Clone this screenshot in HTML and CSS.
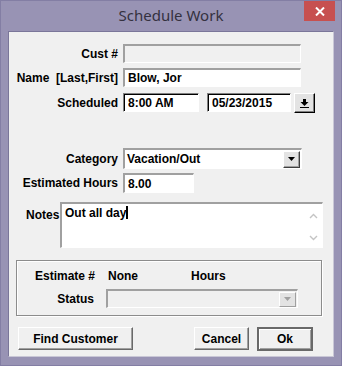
FILE: index.html
```html
<!DOCTYPE html>
<html lang="en">
<head>
    <meta charset="UTF-8">
    <title>Schedule Work</title>
    <link rel="stylesheet" href="styles.css">
</head>
<body>
    <div class="window">
        <div class="titlebar">
            <span></span>
            <span class="title">Schedule Work</span>
            <div class="close">
                <svg width="10" height="9" viewBox="0 0 10 9"><path d="M1 0.5 L9 8.5 M9 0.5 L1 8.5" stroke="#fff" stroke-width="2"/></svg>
            </div>
        </div>
        <div class="client">
            <div class="row row-cust">
                <label class="lbl">Cust #</label>
                <input class="field wide disabled" type="text" value="" disabled>
            </div>
            <div class="row row-name">
                <label class="lbl">Name&nbsp;&nbsp;[Last,First]</label>
                <input class="field wide" type="text" value="Blow, Jor">
            </div>
            <div class="row row-sched">
                <label class="lbl">Scheduled</label>
                <input class="field dark time" type="text" value="8:00 AM">
                <input class="field dark date" type="text" value="05/23/2015">
                <div class="pick-btn">
                    <svg width="9" height="10" viewBox="0 0 9 10"><path d="M3 1 H6 V4 H8.5 L4.5 8 L0.5 4 H3 Z" fill="#000"/><rect x="0" y="9" width="9" height="1" fill="#000"/></svg>
                </div>
            </div>
            <div class="row row-cat">
                <label class="lbl">Category</label>
                <div class="field combo">
                    <span class="combo-text">Vacation/Out</span>
                    <div class="drop-btn"><svg width="7" height="4" viewBox="0 0 7 4"><path d="M0 0 H7 L3.5 4 Z" fill="#000"/></svg></div>
                </div>
            </div>
            <div class="row row-hours">
                <label class="lbl">Estimated Hours</label>
                <input class="field hours" type="text" value="8.00">
            </div>
            <div class="row-notes">
                <label class="notes-lbl">Notes</label>
                <div class="field notes">
                    <div class="notes-text">Out all day<span class="caret"></span></div>
                    <div class="scroll">
                        <svg width="9" height="6" viewBox="0 0 9 6"><path d="M1 5 L4.5 1.5 L8 5" stroke="#c4c4c4" stroke-width="1.4" fill="none"/></svg>
                        <svg width="9" height="6" viewBox="0 0 9 6"><path d="M1 1 L4.5 4.5 L8 1" stroke="#c4c4c4" stroke-width="1.4" fill="none"/></svg>
                    </div>
                </div>
            </div>
            <div class="group">
                <div class="grow">
                    <span class="g-lbl">Estimate #</span>
                    <span class="g-val">None</span>
                    <span>Hours</span>
                </div>
                <div class="grow grow-status">
                    <span class="g-lbl status-lbl">Status</span>
                    <div class="field combo status disabled">
                        <span class="combo-text"></span>
                        <div class="drop-btn off"><svg width="7" height="4" viewBox="0 0 7 4"><path d="M0 0 H7 L3.5 4 Z" fill="#a0a0a0"/></svg></div>
                    </div>
                </div>
            </div>
            <div class="buttons">
                <button class="btn find">Find Customer</button>
                <button class="btn cancel">Cancel</button>
                <button class="btn ok">Ok</button>
            </div>
        </div>
    </div>
</body>
</html>
```

FILE: styles.css
```css
/* Window frame */
body {
    margin: 0;
    font-family: "Liberation Sans", Arial, sans-serif;
}
.window {
    width: 340px;
    height: 364px;
    border: 1px solid #837ea4;
    background: #9893b4;
}
.titlebar {
    height: 30px;
    display: grid;
    grid-template-columns: 1fr auto 1fr;
}
.title {
    font-family: "Noto Sans", sans-serif;
    font-size: 15px;
    line-height: 28px;
    color: #34313f;
}
.close {
    justify-self: end;
    width: 31px;
    height: 20px;
    margin-right: 6px;
    background: #c75050;
    display: flex;
    align-items: center;
    justify-content: center;
}

/* Dialog body */
.client {
    margin-left: 7px;
    width: 324px;
    height: 312px;
    padding-top: 12px;
    border-top: 1px solid #7a7699;
    border-left: 1px solid #7a7699;
    border-right: 1px solid #c9c7d6;
    border-bottom: 1px solid #c9c7d6;
    background: #f0f0f0;
    font-size: 12px;
    font-weight: bold;
    color: #000;
}
.row {
    display: flex;
    align-items: center;
    height: 19px;
}
.lbl {
    width: 109px;
    margin-right: 5px;
    text-align: right;
    white-space: nowrap;
}
.row-name { margin-top: 5px; }
.row-sched { margin-top: 6px; }
.row-cat { margin-top: 36px; height: 21px; }
.row-hours { margin-top: 4px; height: 20px; }

/* Sunken fields */
.field {
    box-sizing: border-box;
    height: 100%;
    margin: 0;
    padding: 0 3px;
    border-top: 2px solid #a0a0a0;
    border-left: 2px solid #a0a0a0;
    border-right: 1px solid #fff;
    border-bottom: 1px solid #fff;
    background: #fff;
    font: inherit;
    color: #000;
    outline: none;
}
.field.dark {
    border-top: 1px solid #808080;
    border-left: 1px solid #808080;
    box-shadow: inset 1px 1px 0 #000;
    padding-left: 4px;
}
.disabled { background: #f0f0f0; }
.wide { width: 178px; }
.time { width: 76px; }
.date { width: 84px; margin-left: 8px; }
.hours { width: 71px; }
.pick-btn {
    box-sizing: border-box;
    width: 21px;
    height: 20px;
    margin-left: 3px;
    border-top: 1px solid #fff;
    border-left: 1px solid #fff;
    border-right: 1px solid #000;
    border-bottom: 1px solid #000;
    box-shadow: inset -1px -1px 0 #808080;
    background: #e3e3e3;
    display: flex;
    align-items: center;
    justify-content: center;
}

/* Combo box */
.combo {
    width: 179px;
    display: flex;
    align-items: center;
    padding: 0 1px 0 2px;
}
.combo-text { flex: 1; }
.drop-btn {
    box-sizing: border-box;
    width: 17px;
    height: 17px;
    border-top: 1px solid #fff;
    border-left: 1px solid #fff;
    border-right: 1px solid #404040;
    border-bottom: 1px solid #404040;
    box-shadow: inset -1px -1px 0 #a0a0a0;
    background: #e3e3e3;
    display: flex;
    align-items: center;
    justify-content: center;
}
.drop-btn.off {
    border-right-color: #a0a0a0;
    border-bottom-color: #a0a0a0;
    box-shadow: none;
    width: 17px;
    height: 15px;
}

/* Notes */
.row-notes {
    display: flex;
    margin-top: 9px;
    height: 46px;
}
.notes-lbl {
    width: 34px;
    margin-left: 17px;
    padding-top: 6px;
}
.notes {
    width: 263px;
    display: flex;
    padding: 2px 0 0 3px;
}
.notes-text {
    flex: 1;
    line-height: 14px;
}
.caret {
    display: inline-block;
    width: 2px;
    height: 13px;
    background: #000;
    vertical-align: -2px;
}
.scroll {
    width: 17px;
    display: flex;
    flex-direction: column;
    justify-content: space-between;
    align-items: center;
    padding: 7px 0 6px;
}

/* Group box */
.group {
    box-sizing: border-box;
    width: 306px;
    height: 56px;
    margin: 12px 0 0 7px;
    border: 1px solid #8c8c8c;
    box-shadow: 1px 1px 0 #fff, inset 1px 1px 0 #fff;
    padding-top: 7px;
}
.grow {
    display: flex;
    align-items: center;
    height: 15px;
}
.g-lbl {
    width: 78px;
    text-align: right;
    margin-right: 13px;
}
.g-val { width: 83px; }
.grow-status {
    margin-top: 6px;
    height: 19px;
}
.status-lbl {
    width: 77px;
    margin-right: 12px;
}
.status { width: 192px; }

/* Buttons */
.buttons {
    display: flex;
    margin: 11px 0 0 9px;
}
.btn {
    box-sizing: border-box;
    height: 23px;
    margin: 0;
    padding: 0;
    border-top: 1px solid #fff;
    border-left: 1px solid #fff;
    border-right: 1px solid #696969;
    border-bottom: 1px solid #696969;
    box-shadow: inset -1px -1px 0 #a0a0a0;
    background: #f0f0f0;
    font: inherit;
    color: #000;
}
.find { width: 115px; }
.cancel { width: 55px; margin-left: 61px; }
.ok {
    width: 56px;
    height: 24px;
    margin-left: 8px;
    border: 2px solid #696969;
    box-shadow: inset 1px 1px 0 #fff, inset -1px -1px 0 #a0a0a0;
}
```
